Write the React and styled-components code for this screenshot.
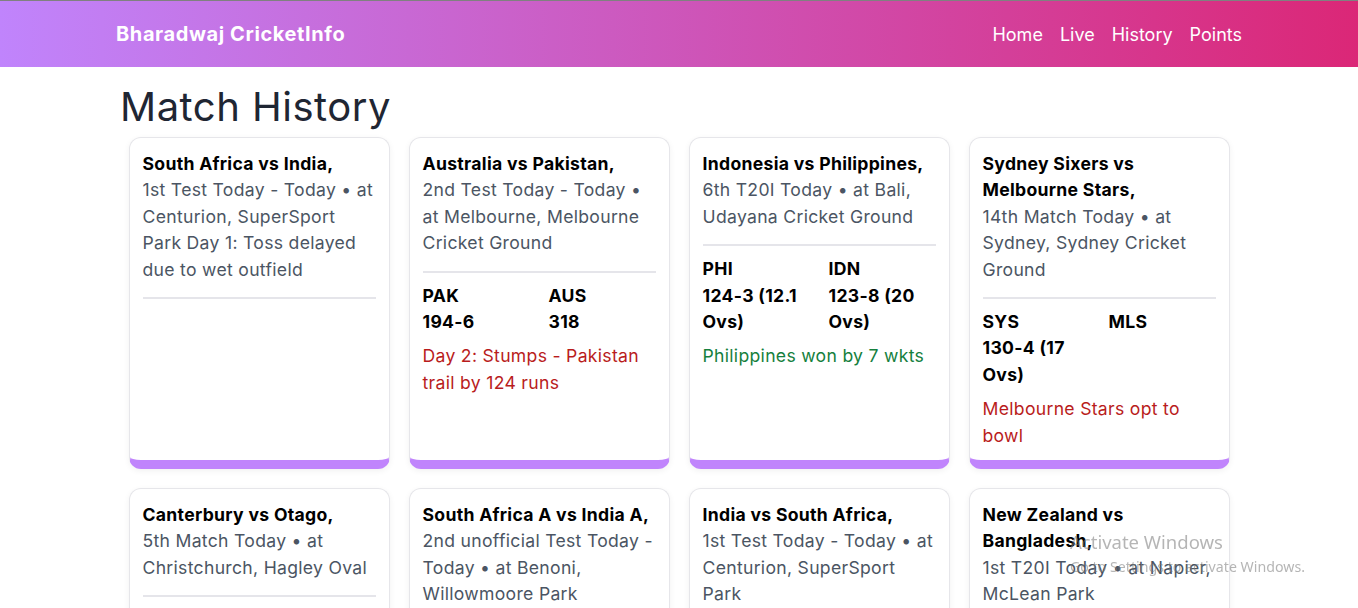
import React from "react";
import styled, { createGlobalStyle } from "styled-components";

const GlobalStyle = createGlobalStyle`
  * { box-sizing: border-box; }
  body {
    margin: 0;
    font-family: "Inter", "Noto Sans", sans-serif;
    background: #ffffff;
    color: #212529;
  }
`;

const Navbar = styled.nav`
  height: 67px;
  border-top: 1px solid #808080;
  background: linear-gradient(to right, #c084fc, #db2777);
  display: flex;
  align-items: center;
  justify-content: space-between;
  padding: 0 116px;
`;

const Brand = styled.a`
  color: #fff;
  font-weight: 700;
  font-size: 20px;
  letter-spacing: 0.6px;
  text-decoration: none;
`;

const NavLinks = styled.div`
  display: flex;
  gap: 17px;
`;

const NavLink = styled.a`
  color: #fff;
  font-size: 18px;
  text-decoration: none;
`;

const Main = styled.main`
  width: 1116px;
  margin: 0 auto;
`;

const Heading = styled.h1`
  font-size: 40px;
  font-weight: 400;
  line-height: 1.2;
  letter-spacing: 0.5px;
  margin: 16px 0 6px -1px;
  color: #1f2633;
`;

const Grid = styled.div`
  width: 1101px;
  margin: 0 auto;
  display: grid;
  grid-template-columns: repeat(4, 261px);
  gap: 19px;
`;

const Card = styled.div`
  border: 1px solid #e6e6ea;
  border-bottom: 9px solid #c084fc;
  border-radius: 12px;
  padding: 13px 13px 11px;
  box-shadow: 0 2px 6px rgba(0, 0, 0, 0.06);
  background: #fff;
  letter-spacing: 0.3px;
`;

const Title = styled.div`
  font-weight: 700;
  font-size: 17.6px;
  line-height: 26.4px;
  color: #000;
`;

const Info = styled.div`
  font-size: 17.6px;
  line-height: 26.4px;
  color: #4b5563;
`;

const Divider = styled.hr`
  border: 0;
  border-top: 2px solid #e5e5ea;
  margin: 14px 0 10px;
`;

const Scores = styled.div`
  display: grid;
  grid-template-columns: 126px 1fr;
  font-weight: 700;
  font-size: 17.6px;
  line-height: 26.4px;
  color: #000;
`;

const TeamScore = styled.div`
  padding-right: 20px;
`;

const Result = styled.div`
  margin-top: 8px;
  font-size: 17.6px;
  line-height: 26.4px;
  color: ${(p) => (p.$won ? "#15803d" : "#b91c1c")};
`;

const Watermark = styled.div`
  position: fixed;
  left: 1070px;
  top: 529px;
  color: rgba(120, 120, 120, 0.55);
  font-family: "Noto Sans", sans-serif;
  pointer-events: none;
`;

const WatermarkTitle = styled.div`
  font-size: 18.5px;
`;

const WatermarkSub = styled.div`
  font-size: 14.2px;
  margin-top: 3px;
`;

const matches = [
  {
    id: 1,
    title: "South Africa vs India,",
    info: "1st Test Today - Today • at Centurion, SuperSport Park Day 1: Toss delayed due to wet outfield",
  },
  {
    id: 2,
    title: "Australia vs Pakistan,",
    info: "2nd Test Today - Today • at Melbourne, Melbourne Cricket Ground",
    teams: [
      { name: "PAK", score: "194-6" },
      { name: "AUS", score: "318" },
    ],
    result: "Day 2: Stumps - Pakistan trail by 124 runs",
  },
  {
    id: 3,
    title: "Indonesia vs Philippines,",
    info: "6th T20I Today • at Bali, Udayana Cricket Ground",
    teams: [
      { name: "PHI", score: "124-3 (12.1 Ovs)" },
      { name: "IDN", score: "123-8 (20 Ovs)" },
    ],
    result: "Philippines won by 7 wkts",
    won: true,
  },
  {
    id: 4,
    title: "Sydney Sixers vs Melbourne Stars,",
    info: "14th Match Today • at Sydney, Sydney Cricket Ground",
    teams: [
      { name: "SYS", score: "130-4 (17 Ovs)" },
      { name: "MLS", score: "" },
    ],
    result: "Melbourne Stars opt to bowl",
  },
  {
    id: 5,
    title: "Canterbury vs Otago,",
    info: "5th Match Today • at Christchurch, Hagley Oval",
    teams: [
      { name: "OTG", score: "172-6 (20 Ovs)" },
      { name: "CTB", score: "" },
    ],
    result: "Canterbury opt to bowl",
  },
  {
    id: 6,
    title: "South Africa A vs India A,",
    info: "2nd unofficial Test Today - Today • at Benoni, Willowmoore Park",
    teams: [
      { name: "SAA", score: "" },
      { name: "INDA", score: "" },
    ],
    result: "Match starts soon",
  },
  {
    id: 7,
    title: "India vs South Africa,",
    info: "1st Test Today - Today • at Centurion, SuperSport Park",
  },
  {
    id: 8,
    title: "New Zealand vs Bangladesh,",
    info: "1st T20I Today • at Napier, McLean Park",
    teams: [
      { name: "BAN", score: "" },
      { name: "NZ", score: "" },
    ],
    result: "Bangladesh opt to bowl",
  },
];

const MatchCard = ({ match }) => (
  <Card>
    <Title>{match.title}</Title>
    <Info>{match.info}</Info>
    <Divider />
    {match.teams && (
      <Scores>
        {match.teams.map((t) => (
          <TeamScore key={t.name}>
            <div>{t.name}</div>
            <div>{t.score}</div>
          </TeamScore>
        ))}
      </Scores>
    )}
    {match.result && <Result $won={match.won}>{match.result}</Result>}
  </Card>
);

export default function App() {
  return (
    <>
      <GlobalStyle />
      <Navbar>
        <Brand href="#">Bharadwaj CricketInfo</Brand>
        <NavLinks>
          <NavLink href="#">Home</NavLink>
          <NavLink href="#">Live</NavLink>
          <NavLink href="#">History</NavLink>
          <NavLink href="#">Points</NavLink>
        </NavLinks>
      </Navbar>
      <Main>
        <Heading>Match History</Heading>
        <Grid>
          {matches.map((m) => (
            <MatchCard key={m.id} match={m} />
          ))}
        </Grid>
      </Main>
      <Watermark>
        <WatermarkTitle>Activate Windows</WatermarkTitle>
        <WatermarkSub>Go to Settings to activate Windows.</WatermarkSub>
      </Watermark>
    </>
  );
}
